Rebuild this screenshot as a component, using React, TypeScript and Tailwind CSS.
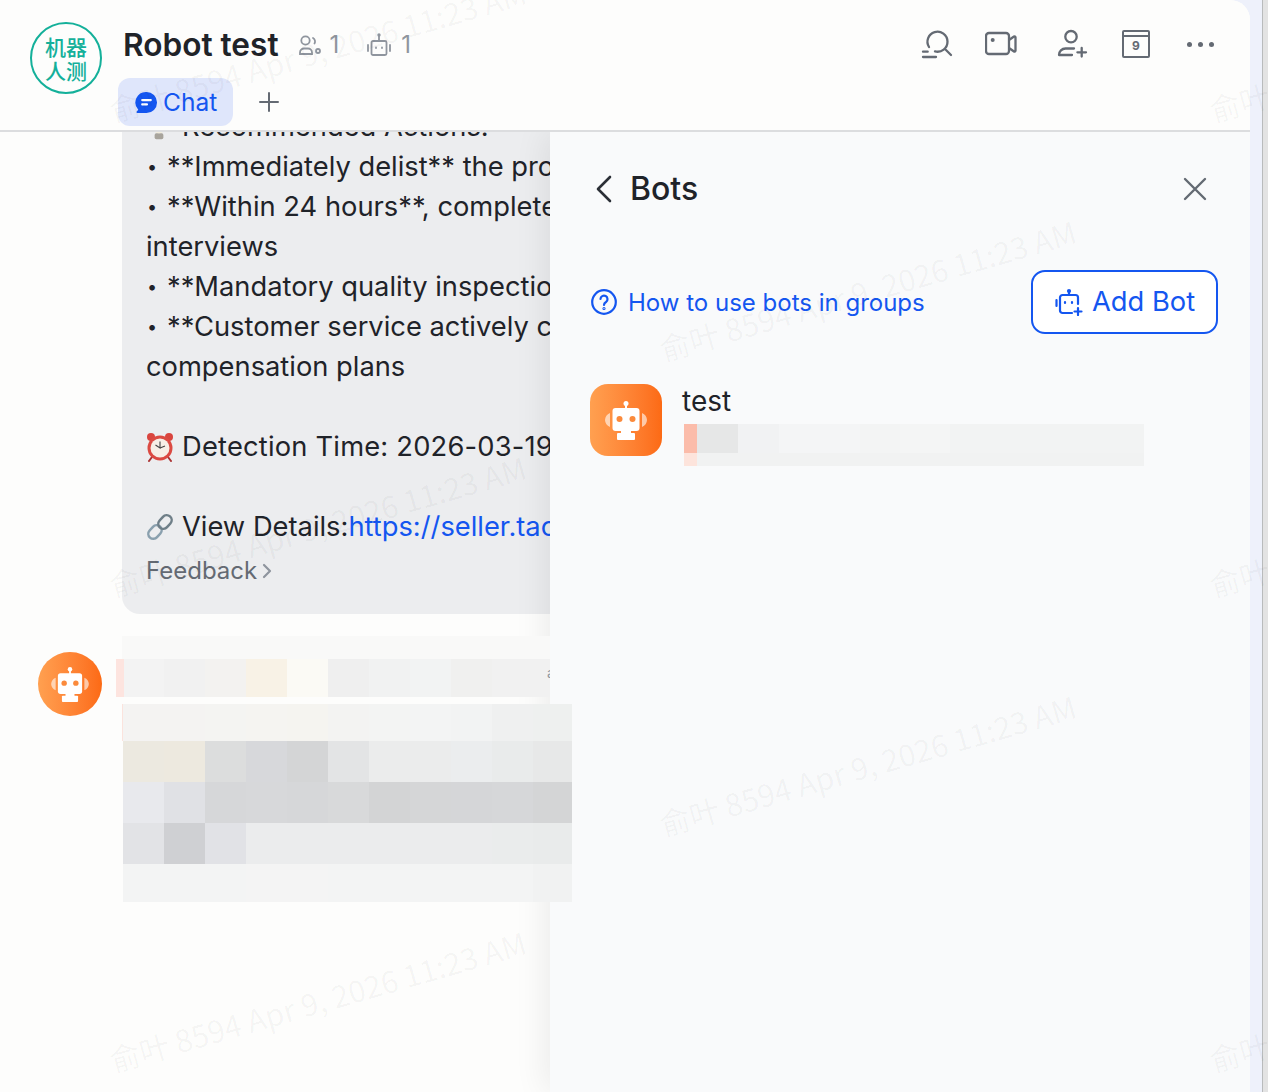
import React from 'react';

const marks = [
  'left-[110px] top-[90px]',
  'left-[660px] top-[329px]',
  'left-[110px] top-[565px]',
  'left-[660px] top-[804px]',
  'left-[110px] top-[1040px]',
  'left-[1210px] top-[90px]',
  'left-[1210px] top-[565px]',
  'left-[1210px] top-[1040px]',
];

const bubbleLines = [
  { bullet: true, text: '**Immediately delist** the product and notify the seller' },
  { bullet: true, text: '**Within 24 hours**, complete customer and seller' },
  { bullet: false, text: 'interviews' },
  { bullet: true, text: '**Mandatory quality inspection** before relisting' },
  { bullet: true, text: '**Customer service actively contacts** buyers with' },
  { bullet: false, text: 'compensation plans' },
];

const nameRow = [
  'w-[8px] bg-[#fde4df]', 'w-[40px] bg-[#f3f3f3]', 'w-[41px] bg-[#f1f1f1]', 'w-[41px] bg-[#f3f2f0]',
  'w-[41px] bg-[#f8f2e6]', 'w-[41px] bg-[#fbfaf5]', 'w-[41px] bg-[#efefef]', 'w-[41px] bg-[#f1f2f2]',
  'w-[41px] bg-[#f2f3f3]', 'w-[41px] bg-[#f0f0ef]', 'w-[58px] bg-[#f1f1f1]',
];

const blockRows = [
  { h: 'h-[37px]', lead: 'bg-[#fbe3dd]', cells: ['bg-[#f4f3f2]', 'bg-[#f4f3f2]', 'bg-[#f4f4f2]', 'bg-[#f5f4f1]', 'bg-[#f5f4f0]', 'bg-[#f3f3f2]', 'bg-[#f3f4f3]', 'bg-[#f3f4f4]', 'bg-[#f2f3f3]', 'bg-[#eff0f0]', 'bg-[#eef0ef]'] },
  { h: 'h-[41px]', lead: 'bg-[#fdfdfc]', cells: ['bg-[#ece9e0]', 'bg-[#ede9df]', 'bg-[#dcdddd]', 'bg-[#d7d8db]', 'bg-[#d4d5d6]', 'bg-[#e3e4e5]', 'bg-[#ebecec]', 'bg-[#ebecec]', 'bg-[#ebedee]', 'bg-[#e9ebeb]', 'bg-[#e7e8e8]'] },
  { h: 'h-[41px]', lead: 'bg-[#fdfdfc]', cells: ['bg-[#e8e9ed]', 'bg-[#e0e1e5]', 'bg-[#d6d7d9]', 'bg-[#d7d8da]', 'bg-[#d6d7d9]', 'bg-[#d8d9da]', 'bg-[#d3d4d5]', 'bg-[#d5d6d7]', 'bg-[#d5d6d8]', 'bg-[#d6d7d9]', 'bg-[#d4d5d6]'] },
  { h: 'h-[41px]', lead: 'bg-[#fdfdfc]', cells: ['bg-[#e2e3e6]', 'bg-[#cfd0d3]', 'bg-[#e1e2e6]', 'bg-[#ebeced]', 'bg-[#ebeced]', 'bg-[#ebeced]', 'bg-[#ebeced]', 'bg-[#ebeced]', 'bg-[#ebeced]', 'bg-[#eaecec]', 'bg-[#e9ebeb]'] },
  { h: 'h-[38px]', lead: 'bg-[#fdfdfc]', cells: ['bg-[#f3f4f4]', 'bg-[#f3f4f4]', 'bg-[#f3f4f4]', 'bg-[#f4f4f4]', 'bg-[#f4f4f4]', 'bg-[#f3f4f4]', 'bg-[#f3f4f4]', 'bg-[#f3f4f4]', 'bg-[#f3f4f4]', 'bg-[#f3f4f4]', 'bg-[#f1f2f2]'] },
];

const descRow = [
  'w-[13px] bg-[#fbbcaa]', 'w-[41px] bg-[#e6e7e7]', 'w-[41px] bg-[#f1f2f3]', 'w-[81px] bg-[#f4f5f6]',
  'w-[40px] bg-[#f3f4f4]', 'w-[50px] bg-[#f4f5f5]', 'w-[194px] bg-[#f2f3f3]',
];

function RobotGlyph({ className }: { className: string }) {
  return (
    <svg viewBox="0 0 42 39" className={className} fill="#fff">
      <circle cx="21" cy="2.500" r="2.500" />
      <rect x="20" y="3" width="2" height="5" />
      <rect x="7.500" y="7" width="27" height="23" rx="3" />
      <rect x="16" y="29" width="10" height="4" />
      <rect x="12" y="32" width="18" height="7" rx="1" />
      <path d="M5 12v14a8 8 0 0 1-5-7 8 8 0 0 1 5-7zM37 12v14a8 8 0 0 0 5-7 8 8 0 0 0-5-7z" opacity="0.6" />
      <circle cx="14.500" cy="18" r="3" fill="#fb8a3c" />
      <circle cx="27.500" cy="18" r="3" fill="#fb8a3c" />
    </svg>
  );
}

function ClockEmoji() {
  return (
    <svg viewBox="0 0 28 30" className="w-[28px] h-[30px] shrink-0">
      <circle cx="5" cy="5" r="4" fill="#d9453e" />
      <circle cx="23" cy="5" r="4" fill="#d9453e" />
      <path d="M6 25l-3 4M22 25l3 4" stroke="#a33" strokeWidth="2" strokeLinecap="round" />
      <circle cx="14" cy="16" r="12.500" fill="#db4a42" />
      <circle cx="14" cy="16" r="9.500" fill="#f7efe6" />
      <path d="M14 9.500V16l-4.500-3M14 16l5-2" stroke="#444" strokeWidth="1.100" fill="none" />
    </svg>
  );
}

function LinkEmoji() {
  return (
    <svg viewBox="0 0 28 30" className="w-[28px] h-[30px] shrink-0" fill="none">
      <rect x="1.500" y="15" width="15" height="10" rx="5" transform="rotate(-48 9 20)" stroke="#8aa0ae" strokeWidth="2.500" />
      <rect x="11.500" y="5" width="15" height="10" rx="5" transform="rotate(-48 19 10)" stroke="#6f7f88" strokeWidth="2.500" />
    </svg>
  );
}

export default function App() {
  return (
    <div className="relative flex w-[1268px] h-[1092px] overflow-hidden bg-[#eef1fb] font-['Inter','Noto_Sans_CJK_SC',sans-serif] text-[#1f2329]">
      <div className="relative w-[1250px] h-full shrink-0 rounded-tr-[20px] overflow-hidden bg-[#fdfdfc] flex flex-col">
        {/* header */}
        <header className="relative z-20 h-[132px] shrink-0 border-b-2 border-[#dcdddf] bg-[#fdfdfc] flex justify-between">
          <div className="flex">
            <div className="ml-[30px] mt-[22px] w-[72px] h-[72px] rounded-full border-2 border-[#14b09a] flex items-center justify-center text-center text-[#14b09a] text-[21px] leading-[24px] font-medium font-['Noto_Sans_CJK_SC',sans-serif]">
              <span>机器<br />人测</span>
            </div>
            <div className="ml-[16px] flex flex-col">
              <div className="mt-[26px] h-[38px] ml-[5px] flex items-center">
                <span className="text-[31.600px] font-semibold leading-[38px]">Robot test</span>
                <svg viewBox="0 0 24 24" className="ml-[19px] w-[24px] h-[24px]" fill="none" stroke="#8f959e" strokeWidth="1.800" strokeLinecap="round">
                  <circle cx="7.500" cy="7.500" r="4.200" />
                  <path d="M2 21v-1.500a4 4 0 0 1 4-4h4a4 4 0 0 1 4 4V21zM15 5a4 4 0 0 1 1.500 5.500" />
                  <circle cx="20" cy="18" r="2" />
                </svg>
                <span className="ml-[8px] text-[24px] text-[#8f959e]">1</span>
                <svg viewBox="0 0 24 24" className="ml-[28px] w-[24px] h-[24px]" fill="none" stroke="#8f959e" strokeWidth="1.800" strokeLinecap="round">
                  <path d="M12 2.500v5.500" />
                  <circle cx="12" cy="2" r="0.800" />
                  <rect x="4.500" y="8" width="15" height="14" rx="1.500" />
                  <path d="M1 12v6M23 12v6M9 14.500v.500M15 14.500v.500" />
                </svg>
                <span className="ml-[10px] text-[24px] text-[#8f959e]">1</span>
              </div>
              <div className="mt-[14px] flex items-center">
                <div className="w-[115px] h-[48px] rounded-[12px] bg-[#dfe6fb] flex items-center pl-[17px] text-[#1456f0] text-[24.500px]">
                  <svg viewBox="0 0 24 24" className="w-[23px] h-[23px]">
                    <path d="M12 1a11 11 0 0 1 0 22H2.500c-.800 0-1.200-.900-.700-1.500l1.600-2A11 11 0 0 1 12 1z" fill="#1456f0" />
                    <path d="M7.500 9.500h9M7.500 14h5" stroke="#fff" strokeWidth="2.200" strokeLinecap="round" />
                  </svg>
                  <span className="ml-[5px]">Chat</span>
                </div>
                <svg viewBox="0 0 24 24" className="ml-[24px] w-[24px] h-[24px]" fill="none" stroke="#646a73" strokeWidth="2" strokeLinecap="round">
                  <path d="M12 3v18M3 12h18" />
                </svg>
              </div>
            </div>
          </div>
          <div className="flex h-[88px] items-center mr-[18px]">
            <div className="w-[64px] flex justify-center">
              <svg viewBox="0 0 32 32" className="w-[32px] h-[32px]" fill="none" stroke="#646a73" strokeWidth="2.300" strokeLinecap="round">
                <path d="M8 19A10 10 0 1 1 14 23.400M25 22l5 5" />
                <path d="M2 23.700h4.700M2 29h13" />
              </svg>
            </div>
            <div className="w-[64px] flex justify-center">
              <svg viewBox="0 0 32 32" className="w-[32px] h-[32px]" fill="none" stroke="#646a73" strokeWidth="2.300" strokeLinejoin="round">
                <rect x="1" y="5" width="23" height="21" rx="3" />
                <path d="M24 12l5-3.500a1 1 0 0 1 1.500.800v13.400a1 1 0 0 1-1.500.800L24 20" />
                <circle cx="7.700" cy="12" r="2" fill="#646a73" stroke="none" />
              </svg>
            </div>
            <div className="ml-[7px] w-[64px] flex justify-center">
              <svg viewBox="0 0 32 32" className="w-[32px] h-[32px]" fill="none" stroke="#646a73" strokeWidth="2.300" strokeLinecap="round">
                <circle cx="15" cy="8.700" r="5.700" />
                <path d="M3 27a6.500 6.500 0 0 1 6.500-6.500H18M3 27h13M25.700 20v8.600M21.400 24.300H30" />
              </svg>
            </div>
            <div className="w-[64px] flex justify-center">
              <div className="w-[28px] h-[28px] rounded-[2px] border-[2.500px] border-[#646a73] text-[#646a73] flex flex-col">
                <div className="h-[5px] border-b-2 border-[#646a73]" />
                <span className="flex-1 text-center text-[12px] leading-[18px] font-bold">9</span>
              </div>
            </div>
            <div className="w-[64px] flex justify-center gap-[6px]">
              <span className="w-[5px] h-[5px] rounded-full bg-[#646a73]" />
              <span className="w-[5px] h-[5px] rounded-full bg-[#646a73]" />
              <span className="w-[5px] h-[5px] rounded-full bg-[#646a73]" />
            </div>
          </div>
        </header>

        <div className="flex flex-1 min-h-0">
          {/* chat column */}
          <div className="w-[550px] shrink-0">
            <div className="relative -mt-[25px] ml-[122px] w-[480px] h-[507px] rounded-bl-[18px] bg-[#ecedef] pl-[24px] text-[27.300px] leading-[40px] whitespace-nowrap overflow-hidden">
              <div className="flex items-center">
                <svg viewBox="0 0 16 30" className="ml-[6px] w-[14px] h-[30px] shrink-0">
                  <rect x="3" y="22" width="10" height="7" rx="2" fill="#a8a49c" />
                  <rect x="1" y="2" width="14" height="20" rx="6" fill="#f1ecdc" />
                </svg>
                <span className="ml-[16px]">Recommended Actions:</span>
              </div>
              {bubbleLines.map((line) => (
                <div key={line.text} className="flex">
                  {line.bullet && <span className="w-[21px] shrink-0 pl-[1px] text-[18px]">•</span>}
                  <span>{line.text}</span>
                </div>
              ))}
              <div className="h-[40px]" />
              <div className="flex items-center">
                <ClockEmoji />
                <span className="ml-[8px] tracking-[0.2px]">Detection Time: 2026-03-19 10:42:18</span>
              </div>
              <div className="h-[40px]" />
              <div className="flex items-center">
                <LinkEmoji />
                <span className="ml-[8px]">View Details:</span>
                <span className="text-[#1456f0]">https://seller.tacoshop.com/detail</span>
              </div>
              <div className="mt-[4px] flex items-center text-[24px] text-[#646a73]">
                <span>Feedback</span>
                <svg viewBox="0 0 10 16" className="ml-[5px] w-[10px] h-[16px]" fill="none" stroke="#8f959e" strokeWidth="2.200" strokeLinecap="round" strokeLinejoin="round">
                  <path d="M2 2l6 6-6 6" />
                </svg>
              </div>
            </div>

            <div className="mt-[22px] flex pl-[38px]">
              <div className="mt-[16px] w-[64px] h-[64px] shrink-0 rounded-full bg-linear-to-r from-[#ffa050] to-[#fc6a14] flex items-center justify-center">
                <RobotGlyph className="w-[38px] h-[35px]" />
              </div>
              <div className="ml-[14px] relative z-20">
                <div className="ml-[6px] w-[428px] h-[23px] bg-[#f9f9f8]" />
                <div className="relative flex h-[38px] w-[434px]">
                  {nameRow.map((c, i) => (
                    <div key={i} className={c} />
                  ))}
                  <span className="absolute right-0 top-[4px] text-[14px] leading-[20px] w-[3px] overflow-hidden text-[#8f959e]">a</span>
                </div>
                <div className="mt-[7px] ml-[6px] w-[450px] overflow-hidden">
                  {blockRows.map((row) => (
                    <div key={row.h + row.cells[1]} className={`flex ${row.h}`}>
                      <div className={`w-[1px] shrink-0 ${row.lead}`} />
                      {row.cells.map((c, i) => (
                        <div key={i} className={`w-[41px] shrink-0 ${c}`} />
                      ))}
                    </div>
                  ))}
                </div>
              </div>
            </div>
          </div>

          {/* bots panel */}
          <aside className="relative z-10 flex-1 bg-[#f9fafb] shadow-[-6px_0_30px_rgba(0,0,0,0.07)] pl-[40px] pr-[32px]">
            <div className="mt-[37px] h-[40px] flex items-center justify-between">
              <div className="flex items-center">
                <svg viewBox="0 0 16 28" className="ml-[6px] w-[16px] h-[28px]" fill="none" stroke="#2b2f36" strokeWidth="2.600" strokeLinecap="round" strokeLinejoin="round">
                  <path d="M14 2L2 14l12 12" />
                </svg>
                <span className="ml-[18px] text-[32px] font-medium">Bots</span>
              </div>
              <svg viewBox="0 0 24 24" className="mr-[11px] w-[24px] h-[24px]" fill="none" stroke="#646a73" strokeWidth="2.400" strokeLinecap="round">
                <path d="M2 2l20 20M22 2L2 22" />
              </svg>
            </div>
            <div className="mt-[61px] flex items-center justify-between">
              <div className="flex items-center text-[#1456f0] text-[24px]">
                <svg viewBox="0 0 26 26" className="ml-[1px] w-[26px] h-[26px]" fill="none" stroke="#1456f0" strokeWidth="2.200" strokeLinecap="round">
                  <circle cx="13" cy="13" r="11.800" />
                  <path d="M9.500 10a3.500 3.500 0 1 1 5.500 3c-1.300.800-2 1.500-2 3" />
                  <circle cx="13" cy="19.500" r="0.500" />
                </svg>
                <span className="ml-[11px] pt-[2px]">How to use bots in groups</span>
              </div>
              <div className="w-[187px] h-[64px] rounded-[14px] border-2 border-[#1456f0] bg-white flex items-center pl-[22px] text-[#1456f0] text-[27.300px]">
                <svg viewBox="0 0 28 28" className="w-[28px] h-[28px]" fill="none" stroke="#1456f0" strokeWidth="2.200" strokeLinecap="round">
                  <path d="M14 3v4" />
                  <circle cx="14" cy="3" r="1" />
                  <path d="M17 25H7.500A2.500 2.500 0 0 1 5 22.500V9.500A2.500 2.500 0 0 1 7.500 7h13A2.500 2.500 0 0 1 23 9.500V16" />
                  <path d="M1.500 12v6M10 14v1M17 14v1M23 20v7M19.500 23.500h7" />
                </svg>
                <span className="ml-[9px]">Add Bot</span>
              </div>
            </div>
            <div className="mt-[50px] flex">
              <div className="w-[72px] h-[72px] rounded-[18px] bg-linear-to-r from-[#ffa050] to-[#fc6a14] flex items-center justify-center">
                <RobotGlyph className="w-[42px] h-[39px]" />
              </div>
              <div className="ml-[20px]">
                <div className="h-[34px] text-[28px] leading-[34px]">test</div>
                <div className="ml-[2px] mt-[6px] w-[460px]">
                  <div className="flex h-[29px]">
                    {descRow.map((c, i) => (
                      <div key={i} className={c} />
                    ))}
                  </div>
                  <div className="flex h-[13px] bg-[#f1f2f2]">
                    <div className="w-[13px] bg-[#fde4dc]" />
                  </div>
                </div>
              </div>
            </div>
          </aside>
        </div>
      </div>

      {/* window edge */}
      <div className="ml-[12px] w-px bg-[#b9bbbc]" />
      <div className="flex-1 bg-[#e3e3e3]" />

      {/* watermark */}
      {marks.map((m) => (
        <div
          key={m}
          className={`absolute z-30 ${m} pointer-events-none whitespace-nowrap origin-left -rotate-[16deg] text-[30.500px] leading-[40px] text-black/[0.04] font-['Noto_Sans_CJK_SC',sans-serif]`}
        >
          俞叶 8594 Apr 9, 2026 11:23 AM
        </div>
      ))}
    </div>
  );
}
